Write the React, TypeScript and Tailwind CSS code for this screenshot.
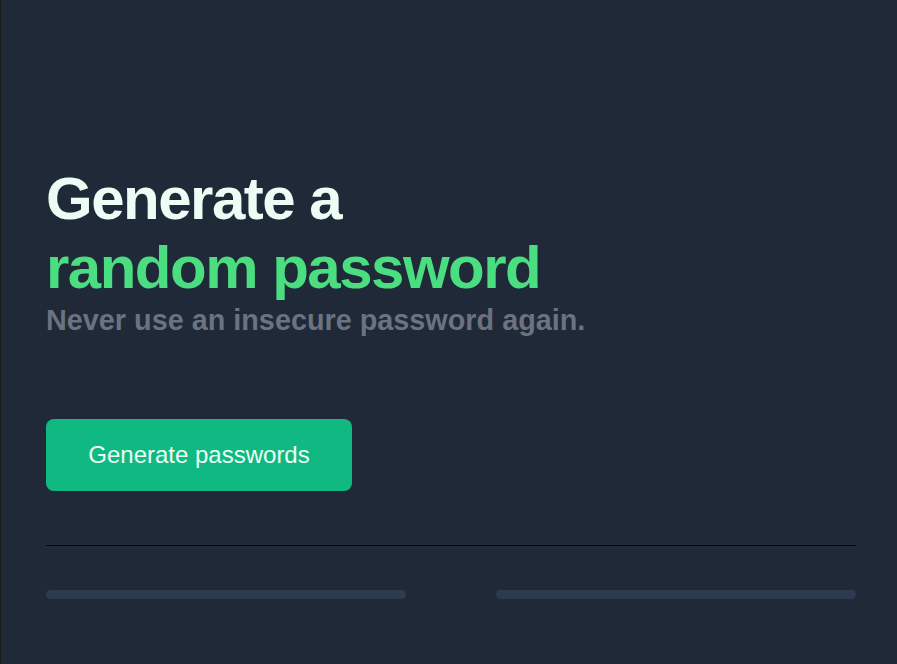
export default function App() {
  return (
    <div className="min-h-[664px] bg-[#1f2937] border-l border-[#1a1a1a] pl-[45px] pr-[41px] pt-[164px] font-['Liberation_Sans',Arial,sans-serif]">
      <h1 className="text-6xl leading-[69px] tracking-tight font-bold text-[#ecfdf5]">
        Generate a
        <br />
        <span className="text-[#4ade80]">random password</span>
      </h1>
      <p className="text-[28.8px] leading-[36px] font-bold text-[#6b7280]">
        Never use an insecure password again.
      </p>
      <button className="mt-[81px] w-[306px] h-[72px] rounded-lg bg-[#10b981] text-2xl text-[#ecfdf5]">
        Generate passwords
      </button>
      <div className="mt-[54px] border-t border-[#05070c]" />
      <div className="mt-[44px] grid grid-cols-2 gap-[90px]">
        <div className="h-[9px] rounded-full bg-[#2e3a50]" />
        <div className="h-[9px] rounded-full bg-[#2e3a50]" />
      </div>
    </div>
  );
}
